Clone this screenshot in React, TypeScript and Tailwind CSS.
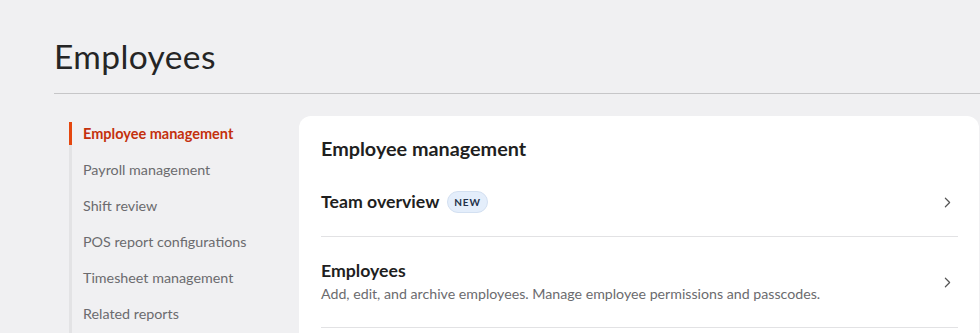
import { ChevronRight } from "lucide-react";

const navItems = [
  "Employee management",
  "Payroll management",
  "Shift review",
  "POS report configurations",
  "Timesheet management",
  "Related reports",
];

export default function App() {
  return (
    <div className="h-[333px] bg-[#f0f0f2] font-['Lato','Noto_Sans',sans-serif] text-[#252525] overflow-hidden">
      <div className="pl-[54px]">
        <h1 className="pt-[34px] h-[93px] text-[33.5px] leading-[44px] tracking-[0.4px] text-[#252525]">
          Employees
        </h1>
        <div className="h-px bg-[#c6c6c8]" />
        <div className="flex pt-[22px]">
          <nav className="w-[245px] pl-[15px] pt-[6px] shrink-0">
            <ul className="border-l-[3px] border-[#e3e3e5] h-[300px]">
              {navItems.map((item, i) => (
                <li
                  key={item}
                  className={
                    i === 0
                      ? "-ml-[3px] border-l-[3px] border-[#e5470f] h-[23px] pl-[11px] text-[14.5px] leading-[23px] font-bold text-[#c4300d] mb-[13px]"
                      : "h-[23px] pl-[11px] text-[14.3px] leading-[23px] text-[#6b6b6e] mb-[13px]"
                  }
                >
                  {item}
                </li>
              ))}
            </ul>
          </nav>
          <section className="flex-1 bg-white rounded-t-[12px] mr-[1px] pl-[22px] pr-[21px] pt-[19px] h-[300px]">
            <h2 className="text-[19.8px] leading-[26px] font-bold text-[#1f1f1f]">
              Employee management
            </h2>
            <div className="flex items-center justify-between h-[76px] border-b border-[#e2e2e4] pt-[7px]">
              <div className="flex items-center gap-[8px]">
                <span className="text-[17.7px] font-bold text-[#1f1f1f]">Team overview</span>
                <span className="rounded-full bg-[#e4eefb] border border-[#d3e0f1] px-[6px] h-[22px] leading-[20px] text-[10px] font-bold tracking-[0.8px] text-[#23324a]">
                  NEW
                </span>
              </div>
              <ChevronRight className="w-[17px] h-[17px] text-[#555] mr-[2px]" strokeWidth={1.7} />
            </div>
            <div className="flex items-center justify-between h-[91px] border-b border-[#e2e2e4]">
              <div className="flex flex-col">
                <span className="text-[17.7px] leading-[24px] font-bold text-[#1f1f1f]">Employees</span>
                <span className="text-[14.2px] leading-[22px] text-[#6b6b6e]">
                  Add, edit, and archive employees. Manage employee permissions and passcodes.
                </span>
              </div>
              <ChevronRight className="w-[17px] h-[17px] text-[#555] mr-[2px]" strokeWidth={1.7} />
            </div>
          </section>
        </div>
      </div>
    </div>
  );
}
